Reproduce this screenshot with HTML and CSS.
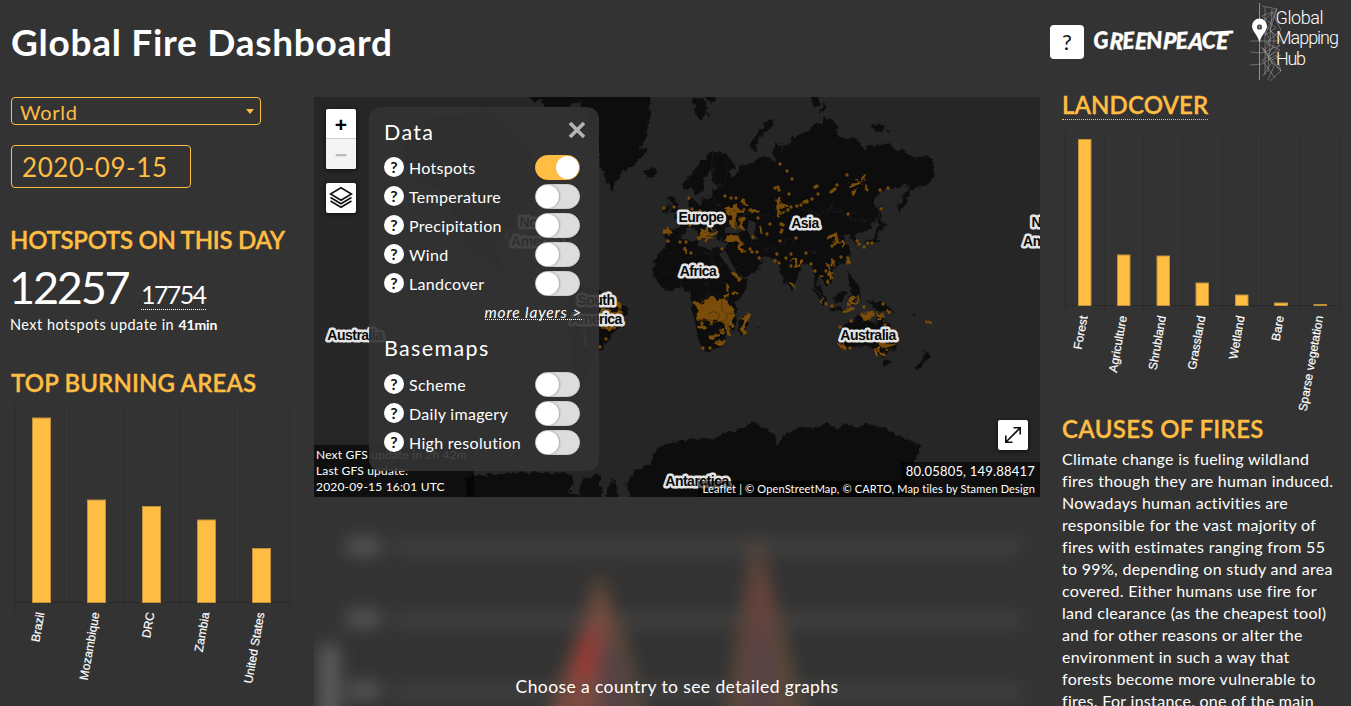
FILE: index.html
```html
<!DOCTYPE html>
<html lang="en">
<head>
<meta charset="utf-8">
<title>Global Fire Dashboard</title>
<link rel="stylesheet" href="styles.css">
</head>
<body>
<header class="header">
  <h1 class="title">Global Fire Dashboard</h1>
  <div class="brand">
    <button class="help">?</button>
    <svg class="greenpeace" viewBox="0 0 142 28" width="142" height="28">
      <text x="1" y="22" textLength="134" lengthAdjust="spacingAndGlyphs" rotate="-5 4 -3 3 -4 3 -3 5 -4 2">GREENPEACE</text>
      <path d="M122 6L139 5" stroke="#fff" stroke-width="3" stroke-linecap="round"/>
    </svg>
    <svg class="hub" viewBox="1250 0 92 82" width="92" height="82">
      <g fill="none" stroke="#a5a5a5" stroke-width=".5">
        <path d="M1259.500 3V80" stroke="#909090" stroke-width="1"/>
        <path d="M1262 6L1277 9M1265 7V75M1272 9L1268 72M1262 22L1277 9L1265 35L1276 28L1262 16L1272 12L1281 30L1266 43L1280 50L1262 60L1275 78M1260 41H1281M1250 41H1262M1250 52L1262 53L1280 45L1268 58L1281 71L1270 81M1250 65L1262 64L1276 55L1281 71L1263 48L1274 66L1268 80M1262 30Q1275 38 1265 50M1265 25Q1282 38 1267 56M1261 47L1272 62L1263 76M1277 9L1270 30L1280 40M1272 60L1281 55"/>
      </g>
      <path d="M1259.500 42C1257 34 1252 31 1252 26a7.500 7.500 0 0 1 15 0c0 5-5 8-7.500 16z" fill="#fff"/>
      <circle cx="1259.500" cy="27" r="2.600" fill="#333"/><path d="M1259.500 24.500v5M1257 27h5" stroke="#aaa" stroke-width=".6"/>
      <text x="1275.500" y="23.500" textLength="48">Global</text>
      <text x="1276" y="43.500" textLength="63">Mapping</text>
      <text x="1276" y="65" textLength="30">Hub</text>
    </svg>
  </div>
</header>

<main class="layout">
  <section class="left">
    <div class="select">World<span class="caret"></span></div>
    <div class="date">2020-09-15</div>
    <h2 class="heading hotspots-title">HOTSPOTS ON THIS DAY</h2>
    <div class="numbers"><span class="count">12257</span><span class="previous">17754</span></div>
    <p class="update">Next hotspots update in <b>41min</b></p>
    <h2 class="heading areas-title">TOP BURNING AREAS</h2>
    <svg class="chart" viewBox="11 400 286 300" width="286" height="300">
      <path class="axis" d="M14.500 404V612M14 602.500H290"/>
      <path class="grid" d="M69.500 404V612M124.500 404V612M179.500 404V612M234.500 404V612M289.500 404V612"/>
      <g class="bars">
        <rect x="32.500" y="418" width="18" height="184.500"/><rect x="87.500" y="500" width="18" height="102.500"/><rect x="142.500" y="506.500" width="18" height="96"/><rect x="197.500" y="520" width="18" height="82.500"/><rect x="252.500" y="548.500" width="18" height="54"/>
      </g>
      <g class="ticks">
        <text transform="translate(44.500 613) rotate(-80)">Brazil</text>
        <text transform="translate(99.500 613) rotate(-80)">Mozambique</text>
        <text transform="translate(154.500 613) rotate(-80)">DRC</text>
        <text transform="translate(209.500 613) rotate(-80)">Zambia</text>
        <text transform="translate(264.500 613) rotate(-80)">United States</text>
      </g>
    </svg>
  </section>

  <section class="center">
    <div class="map">
      <svg class="world" viewBox="314 97 726 400" width="726" height="400">
        <filter id="coast" filterUnits="userSpaceOnUse" x="300" y="80" width="760" height="430">
          <feTurbulence type="fractalNoise" baseFrequency=".16" numOctaves="2" seed="4"/>
          <feDisplacementMap in="SourceGraphic" scale="8" xChannelSelector="R" yChannelSelector="G"/>
        </filter>
        <filter id="scatter" filterUnits="userSpaceOnUse" x="300" y="80" width="760" height="430">
          <feTurbulence type="fractalNoise" baseFrequency=".13" numOctaves="2" seed="9"/>
          <feDisplacementMap in="SourceGraphic" scale="11" xChannelSelector="R" yChannelSelector="G"/>
        </filter>
        <g class="land" filter="url(#coast)">
          <path d="M527 90L534 103 540 100 546 107H570L581 100V107L590 118 588 132 596 140 599 154 602 170 607 184 613 190 617 181 621 174 630 166 637 161 643 157 645 150 640 146 646 140 647 128 651 117 649 108 651 90Z"/>
          <path d="M643 171L650 169 655 168 657 173 652 177 646 177Z"/>
          <path d="M692 98L704 99 707 107 701 121 697 115ZM706 110L711 114 709 118ZM703 90L716 90 714 102 708 103Z"/>
          <path d="M773 120L766 122 758 132 751 145 753 152 757 152 757 143 763 134 771 126Z"/>
          <path d="M809 90H819V106L814 107ZM824 103L827 108 820 113Z"/>
          <path d="M665 240L665 229 678 228 680 222 674 218 682 214 690 209 690 194 696 203 702 207 701 198 709 199 713 195 713 189 728 185 716 186 712 180 711 170 705 178 702 191 697 195 693 190 685 189 685 181 691 176 698 165 705 158 715 151 726 154 735 163 735 169 728 171 731 176 738 173 741 164 749 166 756 160 766 157 776 163 773 152 776 143 781 144 782 157 784 143 790 147 793 137 808 131 816 125 824 117 830 119 835 123 838 128 835 135 844 139 857 139 863 149 877 144 890 145 903 152 918 159 920 156 930 157 933 160 933 177 929 183 920 186 911 190 907 200 899 214 899 203 904 196 910 185 900 187 880 191 872 203 878 207 877 220 867 230 854 235 859 243 855 244 850 236 844 236 850 250 848 260 837 267 830 269 834 279 826 286 819 276 817 284 823 294 828 299 825 300 817 290 814 270 809 264 803 264 797 276 791 289 783 277 777 261 770 257 757 257 763 263 756 272 744 278 738 273 732 262 727 251 740 278 748 280 744 292 735 303 737 315 735 325 728 333 723 343 715 350 703 350 698 337 695 321 691 305 690 294 683 286 673 290 662 287 654 276 655 261 667 243 681 238 693 240 700 247 713 249 726 249 728 242 718 239 716 230 710 232 704 240 696 229 688 228 681 237 673 242Z"/>
          <path d="M668 196L673 196 677 204 680 211 670 213 671 206ZM664 207L669 205 669 211 663 213Z"/>
          <path d="M749 313L748 321 742 335 738 329 741 319ZM880 205L881 222 888 224 881 229 878 242 863 244 875 238 877 229ZM848 270L854 281 860 288 858 298 851 292 849 281ZM812 289L817 292 828 304 825 306ZM828 307L847 309 846 311 829 309ZM833 298L844 290 847 293 841 302 835 302ZM849 297L855 295 851 307ZM867 300L877 302 888 306 897 314 882 311 873 307ZM885 361L890 360 887 366 884 366ZM923 350L931 357 924 363 915 372 915 368 924 359ZM902 306L908 311M872 125L882 125 883 131 876 133ZM886 129L892 131 886 132ZM840 329L853 319 862 314 870 315 869 322 876 325 879 313 885 321 893 332 897 339 894 350 883 357 877 353 870 345 858 345 843 350 839 341Z"/>
          <path d="M578 281L598 291 614 299 627 308 624 318 618 328 607 341 596 355 588 370 582 393 572 366 572 333 563 314 566 299Z"/>
          <path d="M466 505V476L520 473 567 473 574 483 568 493 579 495 583 477 600 475 601 505H607L609 482 615 480 618 505H637L627 490 627 481 637 470 652 463 654 453 663 445 681 442 693 438 712 440 725 432 735 432 753 422 761 429 774 432 777 447 787 433 801 427 820 429 825 423 836 428 843 425 860 426 869 424 883 427 897 435 920 445 919 453 910 468 910 505Z"/>
          <path d="M432 118L493 111 527 151 552 175 530 195 523 214 501 239 487 247 512 273 491 266 463 237 444 194 407 170 403 148Z"/>
          <path d="M775 376l2 2M781 386h1M624 389l2 2M755 327l5-1M625 392h1M913 314l5 5M642 273l3 2M666 183h1" stroke="#0a0a0a"/>
        </g>
        <g class="sea">
          <path d="M725 228L735 224 747 229 738 233 725 233ZM749 220L756 223 754 235 759 239 752 240 747 230Z"/>
          <path d="M713 151l-2 20 4 9-7 12-2 12" fill="none" stroke="#262626" stroke-width=".4"/><path d="M719 254L725 250 739 277 735 276Z"/><path d="M826 211q5-2 7-7" fill="none" stroke="#262626"/>
        </g>
        <path class="borders" filter="url(#coast)" d="M699 197l13-1 10 15 18 5 15-3 20 3 20-9 22 7 18-3 20 10 26-2 12 12M670 252l15 8 27-10V264H727M662 273H700L711 286 732 283M682 263V286M707 264V301M697 302l15-7 13 5 12 3M773 252l14-13 18 11 19 6 17 8M713 165l-2 20M725 157l2 25M752 243l14 6 11-3M811 212l21-5 15 7 12-3 8 12M735 268l27-5"/>
        <path class="fires" d="M780 164h0M787 171h0M792 179h0M775 188h0M778 187h0M779 190h0M815 187l2-1M807 202h0M818 194h0M812 199h0M804 202l3-1M797 206h0M801 205h0M831 192l4-3M837 185h0M847 175h0M881 209h0M880 190h0M888 188h0M789 194h0M791 207h0M788 210h0M725 196h0M731 198h0M736 198h0M758 218h0M770 224h0M781 224l2 1M782 230h0M767 234h0M781 232h0M753 237h0M796 238h0M780 241h0M689 198h0M674 207h0M664 208h0M692 209h0M700 211h0M684 223h0M690 225h0M668 241h0M680 242h0M686 242h0M691 253h0M722 249h0M750 249h0M752 252h0M757 252h0M759 258h0M777 254h0M775 261h0M779 263h0M786 258h0M791 254h0M791 266h0M806 253h0M811 264h0M815 271h0M739 280h0M848 214h0M832 246h0M841 257h0M826 271h0M857 241h0M859 244h0M868 243h0M864 247h0M872 243h0M826 304h0M832 306h0M864 307h0M883 304h0M840 327h0M851 321h0M885 325h0M850 348h0M703 348h0M710 348h0M606 339h0M600 347h0"/>
        <path class="fires" filter="url(#scatter)" d="M851 185l6 0M859 182l1 1M864 179h0M866 185v5M867 189h0M854 192h0M778 200v10l2-4M780 206h5M780 211v4M743 202l3 1M733 207l-5 7M732 211h13M735 206v10M753 210l3 0M741 218v8M732 217l-2 5M735 215v10M730 220l6 6M728 210l6 8M743 227h0M760 229l2 3M666 228v5M668 228v4M685 249l1 3M698 239l5-4M703 230l3 7M706 231l10 3M710 237l-4 5M713 227h0M727 238l6 3 4-1M731 237h7M735 241l5 3M738 244l5 7M794 260l1 4M798 264l4-1M791 283l2 3M734 273l3 4M726 285l0 3M735 295l3-1M726 293l1 3M829 237l7-3v5M833 237l5 4M834 243l4-3M842 240v4M847 259l1 4M833 261v4M828 265v4M820 276h3M831 273v6M827 281v2M822 299v2M849 299l5 2M850 304l-2 1M857 299v2M845 310h4M852 309h2M887 309l4 2M862 315h4M868 314h3M865 313v3M867 317h4M878 314l5 2M880 319l3 1M841 344l4 4M881 345l5 1M876 349v5M880 349l3 5M886 346h4M891 343v3M890 351h0M930 321v2M705 299h0M700 304l-3 2M703 308l6-6M695 305h4M700 312l6-5M697 325l6 2M701 325l3 3M711 320l15-20M714 300h8M718 305l8 15M726 305l7 4M724 316l10 2M733 316v10M725 322l4 10M720 331h3M713 336h6M717 343h5M748 316l-5 3M746 320l-4 10M745 318l-2 13M606 303l8 1M616 302l4 5M600 312l22 0M601 323h14M604 328h11M599 318l5 8M585 335v10M590 353h5M505 230v9M510 240h3"/>
        <path class="fires dense" filter="url(#scatter)" d="M698 306L710 300 722 300 732 308 735 316 729 324 715 318 699 319Z"/>
        <path class="inner" d="M697 320h14l4 2 10-1M708 314q6-5 12 1l-3 6M722 300v10l5 5-1 6M727 314l8-1M728 322v9"/>
        <g class="labels">
          <text x="701" y="222">Europe</text><text x="805" y="228">Asia</text><text x="698" y="276">Africa</text><text x="868" y="340">Australia</text><text x="355" y="340">Australia</text><text x="697" y="486">Antarctica</text>
          <text x="596" y="305">South</text><text x="596" y="324">America</text><text x="537" y="227">North</text><text x="537" y="246">America</text><text x="1049" y="227">North</text><text x="1049" y="246">America</text>
        </g>
      </svg>
      <div class="gfs">Next GFS update in 2h 42m<br>Last GFS update:<br>2020-09-15 16:01 UTC</div>
      <div class="map-controls">
        <div class="zoom"><span>+</span><span class="off">−</span></div>
        <div class="tool"><svg width="24" height="24" viewBox="0 0 24 24" fill="none" stroke="#111" stroke-width="1.600"><path d="M12 1.800L22.500 8 12 14.200 1.500 8ZM1.500 11.500L12 17.800 22.500 11.500M1.500 15L12 21.300 22.500 15"/></svg></div>
      </div>
      <div class="panel">
        <span class="close"><svg width="18" height="18" viewBox="0 0 18 18"><path d="M2 2L16 16M16 2L2 16" stroke="#b5b5b5" stroke-width="3.600"/></svg></span>
        <h3 class="panel-title">Data</h3>
        <div class="row"><i>?</i><span>Hotspots</span><b class="toggle on"></b></div>
        <div class="row"><i>?</i><span>Temperature</span><b class="toggle"></b></div>
        <div class="row"><i>?</i><span>Precipitation</span><b class="toggle"></b></div>
        <div class="row"><i>?</i><span>Wind</span><b class="toggle"></b></div>
        <div class="row"><i>?</i><span>Landcover</span><b class="toggle"></b></div>
        <div class="more"><span>more layers &gt;</span></div>
        <h3 class="panel-title basemaps">Basemaps</h3>
        <div class="row"><i>?</i><span>Scheme</span><b class="toggle"></b></div>
        <div class="row"><i>?</i><span>Daily imagery</span><b class="toggle"></b></div>
        <div class="row"><i>?</i><span>High resolution</span><b class="toggle"></b></div>
      </div>
      <div class="tool expand"><svg width="18" height="18" viewBox="0 0 18 18" fill="none" stroke="#111" stroke-width="1.600"><path d="M2 16L16 2M9.500 1.800H16.200V8.500M1.800 9.500V16.200H8.500"/></svg></div>
      <div class="corner">
        <div class="coords">80.05805, 149.88417</div>
        <div class="attribution">Leaflet | © OpenStreetMap, © CARTO, Map tiles by Stamen Design</div>
      </div>
    </div>
    <div class="detail">
      <svg class="blurred" viewBox="314 497 726 240" width="726" height="240">
        <path d="M395 547H1022M395 620H1022M395 692H1022" stroke="#434343" stroke-width="13"/>
        <g fill="#5e5e5e"><rect x="347" y="539" width="33" height="15"/><rect x="347" y="611" width="33" height="15"/><rect x="347" y="683" width="33" height="15"/><rect x="322" y="645" width="15" height="95" fill="#6a6a6a"/></g>
        <path d="M594 585L600 572 610 600 630 650 648 737H545L560 680 578 635ZM754 536L758 536 775 600 789 650 808 737H722L737 640Z" fill="#5a4a39"/>
        <path d="M600 585L612 630 630 737H540L564 680 580 640Z" fill="#7a4b41"/>
        <path d="M757 545L770 600 780 737H740L748 610Z" fill="#6c413e"/>
        <path d="M602 635L625 660 630 737H598ZM757 605L773 660 780 737H743Z" fill="#544246"/>
        <path d="M588 630L597 630 597 670 572 690 576 650Z" fill="#983a34"/>
      </svg>
      <p class="choose">Choose a country to see detailed graphs</p>
    </div>
  </section>

  <section class="right">
    <h2 class="heading landcover"><span>LANDCOVER</span></h2>
    <svg class="chart" viewBox="1062 131 286 284" width="286" height="284">
      <path class="axis" d="M1065.500 131V315M1065 305.500H1341"/>
      <path class="grid" d="M1104.500 131V315M1143.500 131V315M1182.500 131V315M1222.500 131V315M1261.500 131V315M1300.500 131V315M1340.500 131V315"/>
      <g class="bars">
        <rect x="1078.500" y="139.500" width="12.500" height="166"/><rect x="1117.500" y="255" width="12.500" height="50.500"/><rect x="1157" y="256" width="12.500" height="49.500"/><rect x="1196" y="283" width="12.500" height="22.500"/><rect x="1235.500" y="295" width="12.500" height="10.500"/><rect x="1274.500" y="303" width="13" height="2.500"/><rect x="1314" y="304.500" width="12.500" height="1"/>
      </g>
      <g class="ticks">
        <text transform="translate(1087.500 316.500) rotate(-80)">Forest</text>
        <text transform="translate(1126.800 316.500) rotate(-80)">Agriculture</text>
        <text transform="translate(1166 316.500) rotate(-80)">Shrubland</text>
        <text transform="translate(1205.300 316.500) rotate(-80)">Grassland</text>
        <text transform="translate(1244.600 316.500) rotate(-80)">Wetland</text>
        <text transform="translate(1283.900 316.500) rotate(-80)">Bare</text>
        <text transform="translate(1323.200 316.500) rotate(-80)">Sparse vegetation</text>
      </g>
    </svg>
    <h2 class="heading causes-title">CAUSES OF FIRES</h2>
    <p class="causes">Climate change is fueling wildland<br>fires though they are human induced.<br>Nowadays human activities are<br>responsible for the vast majority of<br>fires with estimates ranging from 55<br>to 99%, depending on study and area<br>covered. Either humans use fire for<br>land clearance (as the cheapest tool)<br>and for other reasons or alter the<br>environment in such a way that<br>forests become more vulnerable to<br>fires. For instance, one of the main</p>
  </section>
</main>
</body>
</html>
```
FILE: styles.css
```css
* { box-sizing: border-box; }
body { margin: 0; height: 706px; overflow: hidden; background: #333; color: #fff; font-family: Lato, "Open Sans", sans-serif; }
h1, h2, h3, p { margin: 0; }

.header { height: 97px; display: flex; justify-content: space-between; padding: 0 9px 0 11px; }
.title { font-size: 37px; line-height: 44px; padding-top: 20px; letter-spacing: .73px; font-weight: 700; }
.brand { display: flex; align-items: flex-start; }
.help { width: 34px; height: 34px; margin: 25px 9px 0 0; padding: 0; border: 0; border-radius: 4px; background: #fff; color: #111; font: 22px/34px Lato, sans-serif; }
.greenpeace { margin: 27px 15px 0 0; overflow: visible; }
.greenpeace text { font: italic 900 23px Lato, sans-serif; fill: #fff; stroke: #fff; stroke-width: .4px; }
.hub text { font: 300 18px Roboto, sans-serif; fill: #fff; }

.layout { display: grid; grid-template-columns: 303px 726px 289px; column-gap: 0; padding-left: 11px; }
.right { padding-left: 22px; }
.select { width: 250px; height: 28px; display: flex; align-items: center; justify-content: space-between; padding: 1px 6px 0 8px; border: 1px solid #ffbd43; border-radius: 4px; color: #ffbd43; font-size: 20px; letter-spacing: .7px; }
.caret { border: 4px solid transparent; border-top: 5px solid #ffbd43; border-bottom: 0; margin-bottom: 1px; }
.date { width: 180px; height: 43px; margin-top: 20px; padding-left: 10px; border: 1px solid #ffbd43; border-radius: 4px; color: #ffbd43; font-size: 26px; line-height: 43px; letter-spacing: .56px; }
.heading { color: #ffbd43; font-size: 24px; line-height: 34px; font-weight: 600; white-space: nowrap; -webkit-text-stroke: .35px #ffbd43; }
.hotspots-title { margin-top: 35px; letter-spacing: -.28px; margin-left: -1px; }
.numbers { height: 58px; display: flex; align-items: baseline; margin-left: -2px; }
.count { font-size: 45px; line-height: 60px; letter-spacing: -2.2px; width: 132px; font-weight: 400; }
.previous { font-size: 25px; line-height: 29px; letter-spacing: -1.6px; border-bottom: 1px dotted #fff; }
.update { font-size: 14.5px; line-height: 20px; letter-spacing: .48px; margin-left: -1px; white-space: pre; }
.update b { font-size: 14px; letter-spacing: -.1px; }
.areas-title { margin-top: 31px; letter-spacing: .13px; }
.chart { display: block; }
.axis { stroke: #292929; fill: none; }
.grid { stroke: #2d2d2d; fill: none; }
.bars rect { fill: #ffbd43; stroke: #bd903b; stroke-width: 1; }
.ticks text { font: 12px "Liberation Sans", sans-serif; fill: #fff; text-anchor: end; stroke: #fff; stroke-width: .2px; }

.map { position: relative; height: 400px; background: #262626; overflow: hidden; }
.world { display: block; }
.land { fill: #0a0a0a; stroke: #111; stroke-width: .6; stroke-linejoin: round; }
.sea { fill: #262626; }
.borders { fill: none; stroke: #1c1c1c; stroke-width: .7; }
.fires { fill: none; stroke: #7a4d07; stroke-width: 3.3; stroke-linecap: round; stroke-linejoin: round; }
.dense { fill: #7a4d07; }
.inner { fill: none; stroke: #513507; stroke-width: .9; }
.labels text { font: 700 14px "Liberation Sans", sans-serif; letter-spacing: -.5px; text-anchor: middle; fill: #0a0a0a; stroke: #e4e4e4; stroke-width: 5px; stroke-linejoin: round; paint-order: stroke; }
.gfs { position: absolute; left: 0; bottom: 0; width: 160px; height: 52px; padding: 2px; background: rgba(0,0,0,.6); font-size: 12px; line-height: 16px; letter-spacing: .18px; white-space: nowrap; }
.map-controls { position: absolute; left: 12px; top: 12px; display: flex; flex-direction: column; gap: 14px; }
.zoom, .tool { width: 30px; background: #fff; border-radius: 2px; box-shadow: 0 1px 4px rgba(0,0,0,.65); overflow: hidden; }
.zoom span { display: block; height: 30px; color: #000; font: 700 21px/32px "Liberation Sans", sans-serif; text-align: center; border-bottom: 1px solid #ccc; }
.zoom .off { color: #bbb; background: #f4f4f4; border: 0; }
.tool { height: 30px; display: flex; align-items: center; justify-content: center; }
.panel { position: absolute; left: 55px; top: 10px; width: 230px; height: 364px; padding: 11px 19px 0 15px; border-radius: 12px; background: rgba(51,51,51,.91); }
.close { position: absolute; right: 13px; top: 14px; height: 18px; }
.close svg { display: block; }
.panel-title { font-size: 21.5px; line-height: 28px; font-weight: 400; letter-spacing: 1.35px; margin-bottom: 7px; }
.row { height: 29px; display: flex; align-items: center; font-size: 16px; letter-spacing: .3px; white-space: nowrap; }
.row span { margin-top: -1px; }
.row i { width: 20px; height: 20px; border-radius: 50%; background: #fff; color: #111; font: 700 16px/20px Lato, sans-serif; text-align: center; letter-spacing: 0; margin: -1px 5px 0 0; }
.toggle { width: 45px; height: 25px; margin-left: auto; border: 1px solid #ccc; border-radius: 13px; background: #ddd; display: flex; }
.toggle::before { content: ""; width: 23px; height: 23px; border-radius: 50%; background: #fff; box-shadow: 1px 0 2px rgba(0,0,0,.25); }
.on { background: #ffbd43; border-color: #ffbd43; justify-content: flex-end; }
.more { height: 32px; padding-top: 2px; text-align: right; font-size: 15.5px; font-style: italic; line-height: 25px; letter-spacing: .85px; margin-right: -2px; }
.more span { display: inline-block; line-height: 16px; height: 16px; border-bottom: 1px dotted #fff; }
.basemaps { padding-top: 4px; height: 33px; margin-bottom: 7px; }
.expand { position: absolute; right: 12px; bottom: 47px; }
.corner { position: absolute; right: 0; bottom: 0; display: flex; flex-direction: column; align-items: flex-end; }
.coords { height: 19px; padding: 0 5px; background: rgba(0,0,0,.6); font-size: 13px; line-height: 19px; letter-spacing: .2px; }
.attribution { height: 16px; padding: 0 5px; background: rgba(0,0,0,.6); font-size: 11px; line-height: 16px; letter-spacing: .16px; white-space: nowrap; }
.detail { position: relative; height: 209px; overflow: hidden; }
.blurred { display: block; filter: blur(9px); }
.choose { position: absolute; left: 0; right: 0; top: 179px; text-align: center; font-size: 17.500px; line-height: 22px; letter-spacing: .4px; }

.landcover { height: 34px; line-height: 16px; letter-spacing: .1px; }
.landcover span { display: inline-block; height: 23px; border-bottom: 1px dotted #ffbd43; }
.causes-title { line-height: 28px; letter-spacing: .34px; }
.causes { margin-top: 5px; font-size: 16px; line-height: 22px; letter-spacing: .3px; white-space: nowrap; }
```
